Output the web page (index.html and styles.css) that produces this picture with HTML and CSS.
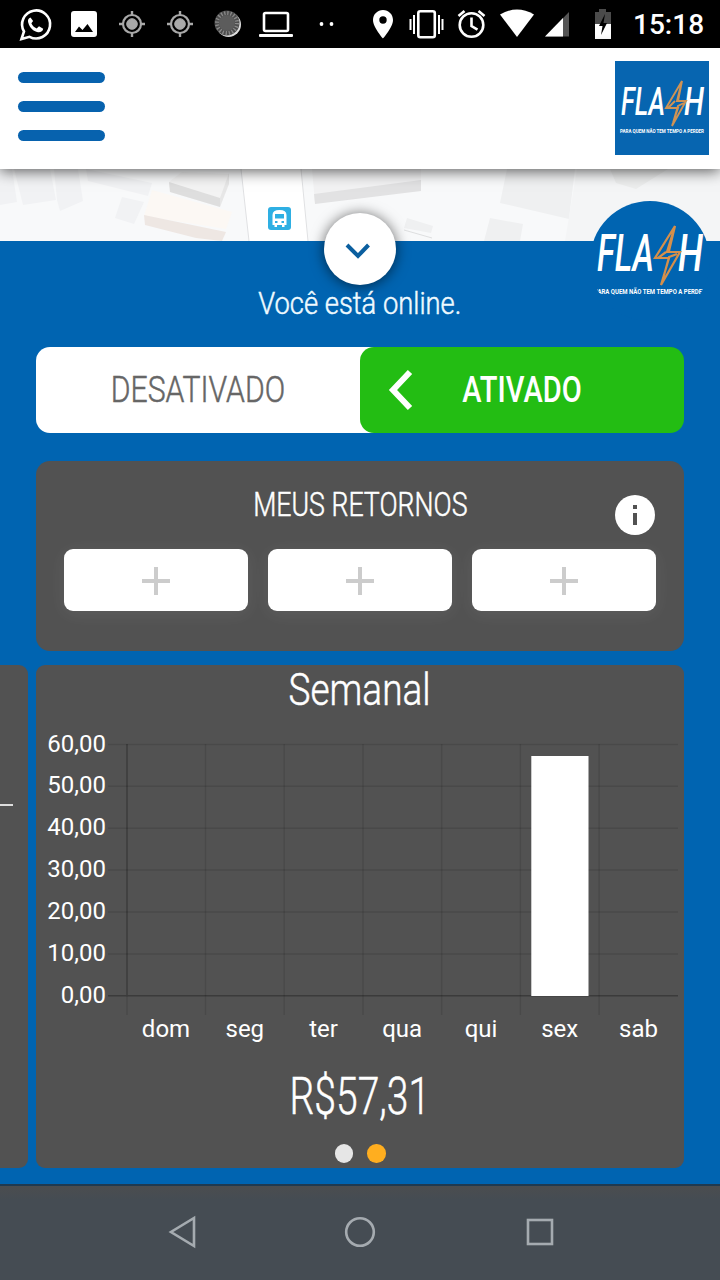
FILE: index.html
```html
<!DOCTYPE html>
<html lang="pt-BR">
<head>
<meta charset="utf-8">
<title>Flash</title>
<link rel="stylesheet" href="styles.css">
</head>
<body>
<div class="screen">
  <div class="status">
    <svg class="status-icons" width="626" height="48" viewBox="0 0 626 48" fill="#fff">
      <path d="M21.500 39 24 31.500A14 14 0 1 1 29.500 36.800Z" fill="none" stroke="#fff" stroke-width="2.600"/>
      <path d="M30.500 17.500c-2 .5-3 2.500-2.300 5 1.600 5.500 5 8.800 9.800 9.700 2.500.4 5-1 5.200-3.400l-4.200-2.600-2.300 2.300c-2.500-1-4.300-3-5.300-5.300l1.700-2.200Z"/>
      <path fill-rule="evenodd" d="M74 11h20q3 0 3 3v20q0 3-3 3H74q-3 0-3-3V14q0-3 3-3ZM75 32H93L87.500 24 82.500 30 79 26.500Z"/>
      <g id="target" fill="#a9a9a9" stroke="#a9a9a9">
        <circle cx="132" cy="24" r="5.300"/>
        <circle cx="132" cy="24" r="9" fill="none" stroke-width="2.200"/>
        <path d="M132 11v4M132 33v4M119 24h4M141 24h4" stroke-width="2.400"/>
      </g>
      <use href="#target" x="48"/>
      <circle cx="228.500" cy="24.500" r="12.500" fill="#ddd"/>
      <circle cx="227" cy="23" r="12.500" fill="#4c4c4c"/>
      <circle cx="227" cy="23" r="10" fill="none" stroke="#8a8a8a" stroke-width="4" stroke-dasharray="1.300 1.840"/>
      <circle cx="227" cy="23" r="8" fill="#5c5c5c"/>
      <rect x="264" y="13" width="24" height="18" rx="1.500" fill="none" stroke="#fff" stroke-width="2.600"/>
      <rect x="259" y="34" width="34" height="3" rx="1"/>
      <circle cx="321.500" cy="24" r="1.900"/><circle cx="331.500" cy="24" r="1.900"/>
      <path fill-rule="evenodd" d="M383 10c-5.600 0-10 4.400-10 10 0 7.300 10 18.500 10 18.500S393 27.300 393 20c0-5.600-4.400-10-10-10Zm0 6.300a3.700 3.700 0 1 1 0 7.400 3.700 3.700 0 0 1 0-7.400Z"/>
      <rect x="418.300" y="11.300" width="16.500" height="26" rx="2" fill="none" stroke="#fff" stroke-width="2.600"/>
      <path d="M414 15v19M410.500 19v11M439 15v19M442.500 19v11" stroke="#fff" stroke-width="2"/>
      <g fill="none" stroke="#fff" stroke-width="2.600">
        <circle cx="471.500" cy="25" r="11.800"/><path d="M471.500 17.500v8.500l6 3.600M458.500 16l6-5M484.500 16l-6-5"/>
      </g>
      <path d="M500 14.500Q517 4.500 534 14.500L517 37Z"/>
      <path d="M569 12V36.500H545Z" fill="#555"/><path d="M563 18V36.500H545Z"/>
      <path d="M599 9h7v3h5v12H595V12h4Z" fill="#4b4b4b"/><path d="M595 24h16v15H595Z"/>
      <path d="M605 14 599 26h3.500L601 35l6-12h-3.500Z" fill="#000"/>
    </svg>
    <span class="clock">15:18</span>
  </div>

  <header class="header">
    <div class="menu"><i></i><i></i><i></i></div>
    <svg class="brand" width="94" height="94" viewBox="0 0 94 94">
      <rect width="94" height="94" fill="#0765b0"/>
      <g fill="#fff" class="logo-text">
        <text x="6" y="54" font-size="38" textLength="44" lengthAdjust="spacingAndGlyphs">FLA</text>
        <text x="69" y="54" font-size="38" textLength="20" lengthAdjust="spacingAndGlyphs">H</text>
        <text x="5" y="71.500" class="tagline" font-size="5.500" textLength="84" lengthAdjust="spacingAndGlyphs">PARA QUEM NÃO TEM TEMPO A PERDER</text>
      </g>
      <path d="M67 20 51 47H63L57 65 71 40H62ZM67 20 63 40M60 40 53 47M69 42 63 45 58 62" fill="none" stroke="#cf9355" stroke-width="1.900"/>
    </svg>
  </header>

  <div class="map">
    <svg width="720" height="72" viewBox="0 0 720 72">
      <rect width="720" height="72" fill="#f8f9fa"/>
      <path d="M0 0H12L17 33 0 36ZM14 0H50L56 31 23 36ZM54 0H78L83 32 60 42 57 31ZM86 0 152 14 148 27 88 12ZM122 28 144 33 134 55 115 49Z" fill="#f1f2f4"/>
      <path d="M169 13 182 3 229 5 220 38 170 23Z" fill="#f3f3f3"/>
      <path d="M169 13 220 29V38L170 23Z" fill="#dedede"/>
      <path d="M220 29 229 4V15L220 38Z" fill="#e7e7e7"/>
      <path d="M152 21 232 43 226 60 144 47Z" fill="#fcf8f4"/><path d="M144 46 226 63 222 72 196 69 145 56Z" fill="#eee7e3"/>
      <path d="M241 0H301L308 72H249Z" fill="#fff"/>
      <path d="M241 0 249 72M301 0 308 72" stroke="#e0e1e3" fill="none"/>
      <path d="M312 0H421V16L315 34Z" fill="#f2f2f3"/><path d="M314 25 421 11V22L315 35Z" fill="#e2e2e3"/>
      <path d="M507 0H575L569 50 500 34ZM490 49 523 55 520 72H484ZM407 49 433 57 431 64 404 59Z" fill="#eff0f1"/>
      <path d="M404 61 432 69" stroke="#dedfe0"/>
      <path d="M577 0 565 72H720V0Z" fill="#f4f5f6"/><path d="M610 0H668L636 20 616 14Z" fill="#eceded"/>
      <rect x="268" y="38" width="23" height="23" rx="3" fill="#2eafe3"/>
      <path fill-rule="evenodd" d="M272.500 46q0-5 7-5t7 5v10h-2v2h-2.500v-2h-5v2h-2.500v-2h-2ZM275 45v4.500h9V45ZM275 52v2h2.500v-2ZM281.500 52v2h2.500v-2Z" fill="#fff"/>
    </svg>
  </div>

  <main class="panel">
    <button class="collapse" aria-label="Recolher">
      <svg width="72" height="72" viewBox="0 0 72 72"><path d="M23 32 34 43 44.500 32" fill="none" stroke="#0b5f9f" stroke-width="4"/></svg>
    </button>
    <svg class="badge" width="120" height="120" viewBox="0 0 120 120">
      <defs><clipPath id="disc"><circle cx="60" cy="60" r="60"/></clipPath></defs>
      <circle cx="60" cy="60" r="60" fill="#0064b1"/>
      <g fill="#fff" class="logo-text">
        <text x="7" y="70" font-size="52" textLength="57" lengthAdjust="spacingAndGlyphs">FLA</text>
        <text x="88" y="70" font-size="52" textLength="25" lengthAdjust="spacingAndGlyphs">H</text>
        <text x="4" y="92.500" class="tagline" font-size="8" textLength="112" lengthAdjust="spacingAndGlyphs" clip-path="url(#disc)">PARA QUEM NÃO TEM TEMPO A PERDER</text>
      </g>
      <path d="M85 25 65 57H79L71 84 90 51H77ZM85 25 79 50M76 51 68 57M87 53 79 56 73 78" fill="none" stroke="#d58f4b" stroke-width="2.200"/>
    </svg>

    <p class="online"><span>Você está online.</span></p>

    <div class="toggle">
      <div class="off"><span>DESATIVADO</span></div>
      <div class="on">
        <svg width="26" height="44" viewBox="0 0 26 44"><path d="M23 4 6 22 23 40" fill="none" stroke="#fff" stroke-width="6"/></svg>
        <span>ATIVADO</span>
      </div>
    </div>

    <section class="returns">
      <h2><span>MEUS RETORNOS</span></h2>
      <svg class="info" width="40" height="40" viewBox="0 0 40 40"><circle cx="20" cy="20" r="20" fill="#fff"/><path d="M18 10h4v4h-4zM18 18h4v12h-4z" fill="#525252"/></svg>
      <div class="slots">
        <div class="slot"></div><div class="slot"></div><div class="slot"></div>
      </div>
    </section>

    <div class="carousel">
      <div class="previous"><i></i></div>
      <section class="weekly">
        <h3><span>Semanal</span></h3>
        <svg class="chart" width="648" height="314" viewBox="36 734 648 314">
          <g fill="none" stroke="#000" stroke-opacity=".1" stroke-width="1.500">
            <path d="M108 744.500H678M108 786.300H678M108 828.200H678M108 870H678M108 912H678M108 954H678"/>
            <path d="M205.500 744V1015M284.200 744V1015M363 744V1015M441.700 744V1015M520.400 744V1015M599.100 744V1015M127 996V1015"/>
            <path d="M127 744V996M108 995.800H678" stroke-opacity=".28"/>
          </g>
          <rect x="531.300" y="756" width="57.200" height="240" fill="#fff"/>
          <g class="labels" text-anchor="end">
            <text x="106" y="752">60,00</text><text x="106" y="793">50,00</text><text x="106" y="835">40,00</text><text x="106" y="877">30,00</text><text x="106" y="919">20,00</text><text x="106" y="961">10,00</text><text x="106" y="1003">0,00</text>
          </g>
          <g class="labels" text-anchor="middle">
            <text x="166" y="1037">dom</text><text x="244.800" y="1037">seg</text><text x="323.500" y="1037">ter</text><text x="402.200" y="1037">qua</text><text x="481" y="1037">qui</text><text x="559.700" y="1037">sex</text><text x="638.500" y="1037">sab</text>
          </g>
        </svg>
        <p class="total"><span>R$57,31</span></p>
        <div class="dots"><i></i><i class="current"></i></div>
      </section>
    </div>
  </main>

  <nav class="navbar">
    <svg width="30" height="34" viewBox="0 0 30 34"><path d="M27 3V31L4 17Z"/></svg>
    <svg width="34" height="34" viewBox="0 0 34 34"><circle cx="17" cy="17" r="13.800"/></svg>
    <svg width="34" height="34" viewBox="0 0 34 34"><rect x="5" y="5" width="24" height="24"/></svg>
  </nav>
</div>
</body>
</html>
```
FILE: styles.css
```css
* { box-sizing: border-box; }
body { margin: 0; font-family: Roboto, "Liberation Sans", sans-serif; }
svg { display: block; }
h2, h3, p { margin: 0; font-weight: 300; text-align: center; -webkit-text-stroke: .5px currentColor; }
h2 span, h3 span, p span, .toggle span { display: inline-block; white-space: nowrap; }
.screen { width: 720px; height: 1280px; overflow: hidden; display: flex; flex-direction: column; background: #0064b1; }
.status { height: 48px; flex: none; background: #000; color: #fff; display: flex; align-items: center; }
.clock { margin-left: 7px; padding-top: 2px; font-size: 28px; line-height: 32px; font-weight: 500; }
.header { position: relative; z-index: 2; height: 121px; flex: none; background: #fff; display: flex; justify-content: space-between; padding: 13px 11px 0 18px; box-shadow: 0 2px 14px rgba(0,0,0,.65); }
.menu { display: flex; flex-direction: column; gap: 18.500px; padding-top: 11px; }
.menu i { width: 87px; height: 10.500px; border-radius: 6px; background: #0762ae; }
.logo-text { font-family: Roboto, sans-serif; font-style: italic; font-weight: 500; }
.tagline { font-style: normal; font-weight: 700; }
.map { height: 72px; flex: none; }
.panel { position: relative; height: 943px; flex: none; padding: 45px 36px 0; }
.collapse { position: absolute; left: 324px; top: -28px; width: 72px; height: 72px; padding: 0; border: 0; border-radius: 50%; background: #fff; box-shadow: 0 1px 14px rgba(0,0,0,.6); }
.badge { position: absolute; left: 590px; top: -40px; }
.online { height: 61px; color: #effaff; font-size: 32px; line-height: 34px; }
.online span { transform: scaleX(.855); }
.toggle { height: 86px; display: flex; background: linear-gradient(90deg, #fff 60%, transparent 60%); border-radius: 14px; font-size: 37px; line-height: 86px; }
.off { width: 324px; text-align: center; color: #666; font-weight: 300; -webkit-text-stroke: .5px currentColor; }
.off span { transform: scaleX(.815); }
.on { position: relative; width: 324px; border-radius: 14px; background: #23bd13; color: #fff; font-weight: 500; text-align: center; }
.on svg { position: absolute; left: 27px; top: 21px; }
.on span { transform: scaleX(.785); }
.returns { position: relative; height: 190px; margin-top: 28px; padding: 25px 28px 0; border-radius: 14px; background: #525252; color: #fff; }
.returns h2 { height: 63px; font-size: 33px; line-height: 38px; }
.returns h2 span { transform: scaleX(.81); }
.info { position: absolute; left: 579px; top: 34px; }
.slots { display: grid; grid-template-columns: repeat(3, 1fr); gap: 20px; }
.slot { height: 62px; border-radius: 9px; background: linear-gradient(#ccc,#ccc) 50% 18px / 4px 28px no-repeat, linear-gradient(#ccc,#ccc) 50% 30px / 28px 4px no-repeat, #fff; box-shadow: 0 3px 18px rgba(255,255,255,.07); }
.carousel { display: flex; gap: 8px; margin: 14px 0 0 -36px; height: 503px; }
.previous { width: 28px; flex: none; border-radius: 0 9px 9px 0; background: #525252; padding-top: 139px; }
.previous i { display: block; width: 13px; height: 2px; background: #ddd; }
.weekly { width: 648px; flex: none; border-radius: 9px; background: #525252; color: #fff; }
.weekly h3 { height: 69px; font-size: 44px; line-height: 51px; }
.weekly h3 span { transform: scaleX(.84); }
.labels { fill: #fff; font-size: 24px; }
.total { height: 96px; padding-top: 19px; font-size: 51px; line-height: 60px; }
.total span { transform: scaleX(.765); }
.dots { display: flex; justify-content: center; gap: 14px; }
.dots i { width: 18.500px; height: 18.500px; border-radius: 50%; background: #e6e6e6; }
.dots .current { background: #ffae1f; }
.navbar { height: 96px; flex: none; display: flex; justify-content: center; align-items: center; gap: 146px; padding: 0 0 2px 3px; border-top: 2px solid #203a50; background: linear-gradient(#4b4d4f, #454c53 14px); }
.navbar svg { fill: none; stroke: #a5abb0; stroke-width: 2.600; }
```
